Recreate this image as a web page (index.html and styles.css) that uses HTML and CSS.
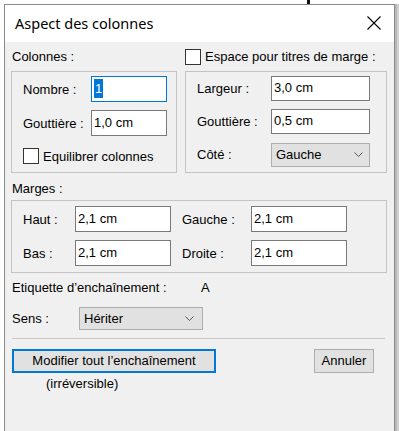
FILE: index.html
```html
<!DOCTYPE html>
<html lang="fr">
<head>
    <meta charset="UTF-8">
    <title>Aspect des colonnes</title>
    <link rel="stylesheet" href="styles.css">
</head>
<body>
    <span class="tick"></span>

    <div class="dialog">
        <div class="titlebar">
            <span class="title">Aspect des colonnes</span>
            <svg class="close" width="14" height="14" viewBox="0 0 14 14">
                <path d="M0.5 0.5 L13.5 13.5 M13.5 0.5 L0.5 13.5" stroke="#000" stroke-width="1.1" fill="none"/>
            </svg>
        </div>

        <div class="content">
            <div class="columns">
                <div class="col-left">
                    <div class="head">Colonnes :</div>
                    <div class="group group-cols">
                        <div class="field">
                            <span class="label lw-cols">Nombre :</span>
                            <span class="input input-cols focused"><span class="sel">1</span></span>
                        </div>
                        <div class="field">
                            <span class="label lw-cols">Gouttière :</span>
                            <span class="input input-cols">1,0 cm</span>
                        </div>
                        <div class="check-row">
                            <span class="checkbox"></span>
                            <span>Equilibrer colonnes</span>
                        </div>
                    </div>
                </div>

                <div class="col-right">
                    <div class="head head-check">
                        <span class="checkbox"></span>
                        <span>Espace pour titres de marge :</span>
                    </div>
                    <div class="group group-titles">
                        <div class="field">
                            <span class="label lw-titles">Largeur :</span>
                            <span class="input input-titles">3,0 cm</span>
                        </div>
                        <div class="field">
                            <span class="label lw-titles">Gouttière :</span>
                            <span class="input input-titles">0,5 cm</span>
                        </div>
                        <div class="field">
                            <span class="label lw-titles">Côté :</span>
                            <span class="select select-side">
                                <span>Gauche</span>
                                <svg class="chevron" width="9" height="5" viewBox="0 0 9 5">
                                    <path d="M0.5 0.5 L4.5 4.5 L8.5 0.5" stroke="#555" stroke-width="1" fill="none"/>
                                </svg>
                            </span>
                        </div>
                    </div>
                </div>
            </div>

            <div class="head head-marges">Marges :</div>
            <div class="group group-marges">
                <div class="field">
                    <span class="label lw-m1">Haut :</span>
                    <span class="input input-m">2,1 cm</span>
                    <span class="label lw-m2">Gauche :</span>
                    <span class="input input-m">2,1 cm</span>
                </div>
                <div class="field">
                    <span class="label lw-m1">Bas :</span>
                    <span class="input input-m">2,1 cm</span>
                    <span class="label lw-m2">Droite :</span>
                    <span class="input input-m">2,1 cm</span>
                </div>
            </div>

            <div class="chain-row">
                <span class="chain-label">Etiquette d’enchaînement :</span>
                <span>A</span>
            </div>

            <div class="sens-row">
                <span class="sens-label">Sens :</span>
                <span class="select select-sens">
                    <span>Hériter</span>
                    <svg class="chevron" width="9" height="5" viewBox="0 0 9 5">
                        <path d="M0.5 0.5 L4.5 4.5 L8.5 0.5" stroke="#555" stroke-width="1" fill="none"/>
                    </svg>
                </span>
            </div>

            <div class="separator"></div>

            <div class="buttons">
                <button class="btn btn-default">Modifier tout l’enchaînement</button>
                <button class="btn btn-cancel">Annuler</button>
            </div>
            <div class="note">(irréversible)</div>
        </div>
    </div>
</body>
</html>
```

FILE: styles.css
```css
body {
    margin: 0;
    background-color: #ffffff;
    font-family: 'Liberation Sans', Arial, sans-serif;
    font-size: 13px;
    color: #000;
    position: relative;
    height: 431px;
    overflow: hidden;
}

.tick {
    position: absolute;
    left: 307px;
    top: 0;
    width: 3px;
    height: 4px;
    background-color: #111;
}

.dialog {
    margin: 4px 0 0 4px;
    width: 389px;
    height: 440px;
    border: 1px solid #8a8a8a;
    border-bottom: none;
    background-color: #f0f0f0;
    box-shadow: 2px 0 0 #b8b8b8, 4px 0 0 #d0d0d0;
}

.titlebar {
    height: 37px;
    background-color: #ffffff;
    display: flex;
    align-items: center;
    justify-content: space-between;
    padding: 0 13px 0 10px;
}

.title {
    font-family: 'Noto Sans', 'Open Sans', sans-serif;
    font-size: 14.5px;
    color: #000;
    margin-top: -1px;
}

.close {
    display: block;
    margin-top: -1px;
}

.content {
    padding: 0 6px 0 6px;
}

.columns {
    display: grid;
    grid-template-columns: 166px 202px;
    column-gap: 8px;
}

.head {
    height: 29px;
    display: flex;
    align-items: center;
    padding-left: 1px;
}

.head-check {
    gap: 4px;
    padding-left: 0;
}

.group {
    border: 1px solid #c4c4c4;
    box-sizing: border-box;
}

.group-cols {
    height: 102px;
    padding: 4px 0 0 11px;
    display: flex;
    flex-direction: column;
    gap: 8px;
}

.group-titles {
    height: 102px;
    padding: 4px 0 0 11px;
    display: flex;
    flex-direction: column;
    gap: 8px;
}

.field {
    display: flex;
    align-items: center;
    height: 26px;
}

.group-titles .field {
    height: 25px;
}

.label {
    flex: none;
}

.lw-cols {
    width: 68px;
}

.lw-titles {
    width: 74px;
}

.input {
    box-sizing: border-box;
    height: 26px;
    background-color: #ffffff;
    border: 1px solid #7a7a7a;
    display: flex;
    align-items: center;
    padding-left: 2px;
    padding-bottom: 2px;
}

.input-cols {
    width: 76px;
}

.input-titles {
    width: 99px;
    height: 25px;
}

.focused {
    border-color: #0078d7;
}

.sel {
    background-color: #0078d7;
    color: #ffffff;
    padding: 0 1px;
    line-height: 19px;
}

.check-row {
    display: flex;
    align-items: center;
    gap: 4px;
    height: 24px;
}

.checkbox {
    display: block;
    width: 14px;
    height: 14px;
    border: 1px solid #333;
    background-color: #ffffff;
    flex: none;
}

.select {
    box-sizing: border-box;
    height: 24px;
    background-color: #e1e1e1;
    border: 1px solid #adadad;
    display: flex;
    align-items: center;
    justify-content: space-between;
    padding: 0 6px 0 4px;
}

.select-side {
    width: 99px;
}

.chevron {
    display: block;
}

.head-marges {
    height: 27px;
    padding-top: 3px;
    box-sizing: border-box;
}

.group-marges {
    width: 376px;
    height: 73px;
    padding: 5px 0 0 11px;
    display: flex;
    flex-direction: column;
    gap: 8px;
}

.lw-m1 {
    width: 52px;
}

.lw-m2 {
    width: 69px;
    margin-left: 11px;
}

.input-m {
    width: 96px;
}

.chain-row {
    height: 29px;
    display: flex;
    align-items: center;
    padding-left: 1px;
}

.chain-label {
    width: 189px;
}

.sens-row {
    display: flex;
    align-items: center;
    margin-top: 5px;
    height: 23px;
    padding-left: 1px;
}

.sens-label {
    width: 67px;
}

.select-sens {
    width: 124px;
    height: 23px;
    padding-left: 4px;
    padding-right: 8px;
}

.separator {
    margin: 8px 3px 0 1px;
    height: 1px;
    background-color: #c8c8c8;
}

.buttons {
    display: flex;
    justify-content: space-between;
    margin-top: 10px;
    padding: 0 14px 0 1px;
}

.btn {
    font-family: 'Liberation Sans', Arial, sans-serif;
    font-size: 13px;
    color: #000;
    background-color: #e1e1e1;
    height: 24px;
    margin: 0;
    padding: 0 0 1px 0;
    border-radius: 0;
    box-sizing: border-box;
}

.btn-default {
    width: 204px;
    border: 2px solid #0078d7;
}

.btn-cancel {
    width: 60px;
    border: 1px solid #adadad;
}

.note {
    height: 20px;
    display: flex;
    align-items: center;
    padding-left: 35px;
}
```
